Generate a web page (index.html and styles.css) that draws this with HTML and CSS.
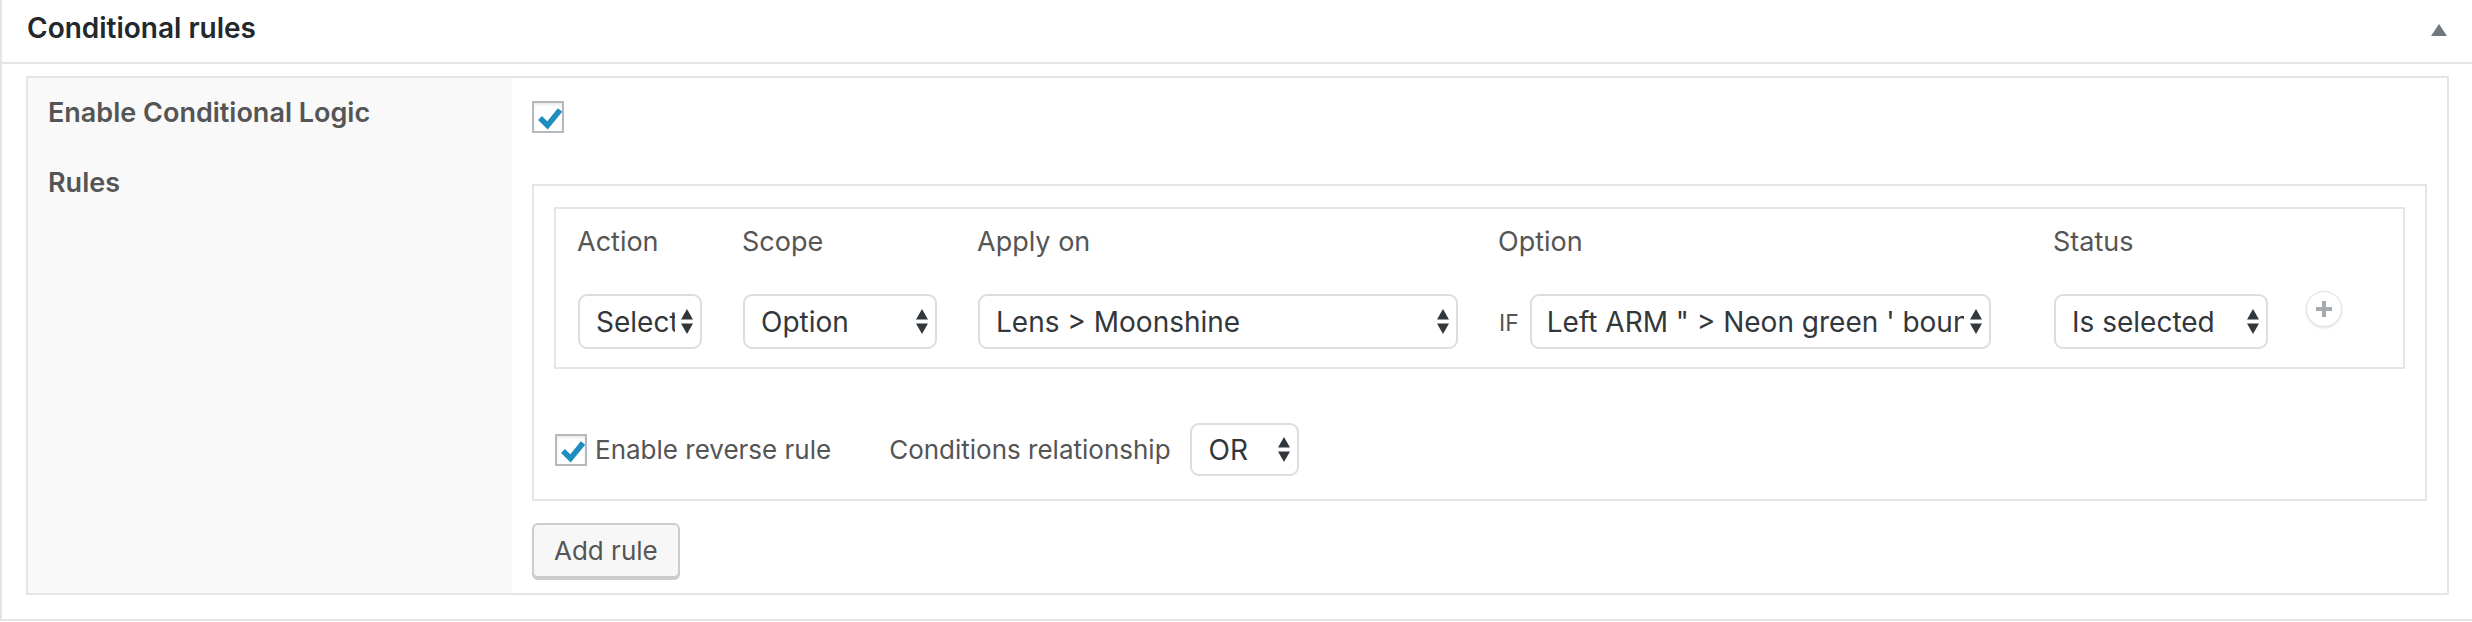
FILE: index.html
```html
<!DOCTYPE html>
<html lang="en">
<head>
<meta charset="utf-8">
<title>Conditional rules</title>
<link rel="stylesheet" href="styles.css">
</head>
<body>
<div class="postbox">
  <div class="hndle">
    <h2 class="hndle-title">Conditional rules</h2>
    <svg class="toggle" width="16" height="12" viewBox="0 0 16 12"><polygon points="8,0 16,12 0,12" fill="#72777c"/></svg>
  </div>
  <div class="inside">
    <div class="form-table">
      <div class="th th-first">Enable Conditional Logic</div>
      <div class="td td-first">
        <span class="checkbox"><svg width="28" height="28" viewBox="0 0 28 28"><polyline points="6,15 13.5,22.5 26,7" fill="none" stroke="#1e8cbe" stroke-width="5.5"/></svg></span>
      </div>
      <div class="th th-rules">Rules</div>
      <div class="td td-rules">
        <div class="rules-box">
          <div class="rule">
            <div class="col-label">Action</div>
            <div class="col-label">Scope</div>
            <div class="col-label">Apply on</div>
            <div class="col-label">Option</div>
            <div class="col-label">Status</div>
            <div class="col-label"></div>

            <div class="select w-action"><span class="select-text">Select</span><svg class="arrows" width="12" height="25" viewBox="0 0 12 25"><polygon points="6,0 12,10.5 0,10.5"/><polygon points="0,14.5 12,14.5 6,25"/></svg></div>
            <div class="select w-scope"><span class="select-text">Option</span><svg class="arrows" width="12" height="25" viewBox="0 0 12 25"><polygon points="6,0 12,10.5 0,10.5"/><polygon points="0,14.5 12,14.5 6,25"/></svg></div>
            <div class="select w-apply"><span class="select-text">Lens &gt; Moonshine</span><svg class="arrows" width="12" height="25" viewBox="0 0 12 25"><polygon points="6,0 12,10.5 0,10.5"/><polygon points="0,14.5 12,14.5 6,25"/></svg></div>
            <div class="cond">
              <span class="if">IF</span>
              <div class="select w-option"><span class="select-text">Left ARM " &gt; Neon green ' bounce</span><svg class="arrows" width="12" height="25" viewBox="0 0 12 25"><polygon points="6,0 12,10.5 0,10.5"/><polygon points="0,14.5 12,14.5 6,25"/></svg></div>
            </div>
            <div class="select w-status"><span class="select-text">Is selected</span><svg class="arrows" width="12" height="25" viewBox="0 0 12 25"><polygon points="6,0 12,10.5 0,10.5"/><polygon points="0,14.5 12,14.5 6,25"/></svg></div>
            <span class="plus"><svg width="16" height="16" viewBox="0 0 16 16"><path d="M8 0v16M0 8h16" stroke="#a7aaad" stroke-width="4"/></svg></span>
          </div>
          <div class="rule-footer">
            <span class="checkbox"><svg width="28" height="28" viewBox="0 0 28 28"><polyline points="6,15 13.5,22.5 26,7" fill="none" stroke="#1e8cbe" stroke-width="5.5"/></svg></span>
            <span class="reverse-label">Enable reverse rule</span>
            <span class="rel-label">Conditions relationship</span>
            <div class="select w-or"><span class="select-text">OR</span><svg class="arrows" width="12" height="25" viewBox="0 0 12 25"><polygon points="6,0 12,10.5 0,10.5"/><polygon points="0,14.5 12,14.5 6,25"/></svg></div>
          </div>
        </div>
        <button class="button" type="button">Add rule</button>
      </div>
    </div>
  </div>
</div>
</body>
</html>
```
FILE: styles.css
```css
html, body {
  margin: 0;
  padding: 0;
  background: #ffffff;
}
body {
  font-family: Inter, "Noto Sans", "DejaVu Sans", sans-serif;
  color: #555555;
}
.postbox {
  box-sizing: border-box;
  width: 100%;
  border-left: 2px solid #e5e5e5;
  border-bottom: 2px solid #e5e5e5;
  background: #ffffff;
}
.hndle {
  display: flex;
  align-items: center;
  justify-content: space-between;
  height: 62px;
  border-bottom: 2px solid #e5e5e5;
  padding: 0 25px 0 25px;
}
.hndle-title {
  margin: 0;
  font-size: 28px;
  font-weight: 600;
  line-height: 40px;
  color: #23282d;
  padding-bottom: 6px;
}
.toggle {
  display: block;
  margin-bottom: 2px;
}
.inside {
  padding: 12px 23px 24px 24px;
}
.form-table {
  display: grid;
  grid-template-columns: 484px 1fr;
  border: 2px solid #e5e5e5;
  background: #ffffff;
}
.th {
  background: #f9f9f9;
  font-size: 27px;
  font-weight: 600;
  line-height: 38px;
  color: #555555;
  padding-left: 20px;
}
.th-first {
  padding-top: 16px;
  padding-bottom: 17px;
}
.th-rules {
  padding-top: 15px;
}
.td {
  padding: 0 20px;
}
.td-first {
  padding-top: 23px;
}
.td-rules {
  padding-top: 35px;
  padding-bottom: 15px;
}
.checkbox {
  box-sizing: border-box;
  display: flex;
  align-items: center;
  justify-content: center;
  width: 32px;
  height: 32px;
  border: 2px solid #b4b9be;
  background: #ffffff;
  box-shadow: inset 0 2px 3px rgba(0, 0, 0, 0.08);
}
.rules-box {
  border: 2px solid #e5e5e5;
  padding: 21px 20px 23px 20px;
}
.rule {
  display: grid;
  grid-template-columns: 165px 235px 521px 555px 252px 36px;
  row-gap: 33px;
  border: 2px solid #e5e5e5;
  padding: 14px 0 18px 22px;
}
.col-label {
  font-size: 27px;
  line-height: 38px;
  color: #555555;
  margin-left: -1px;
}
.select {
  box-sizing: border-box;
  display: flex;
  align-items: center;
  height: 55px;
  border: 2px solid #dddddd;
  border-radius: 9px;
  background: #ffffff;
  padding: 0 7px 0 16px;
  font-size: 28px;
  color: #32373c;
}
.select-text {
  flex: 1;
  min-width: 0;
  overflow: hidden;
  white-space: nowrap;
  margin-right: 6px;
}
.arrows {
  flex: none;
  fill: #32373c;
}
.w-action { width: 124px; }
.w-scope { width: 194px; }
.w-apply { width: 480px; }
.w-option { width: 461px; padding-left: 15px; }
.w-status { width: 214px; }
.w-or { width: 109px; height: 53px; padding-left: 17px; }
.cond {
  display: flex;
  align-items: center;
  gap: 11px;
}
.if {
  font-size: 23px;
  color: #555555;
  padding-top: 2px;
}
.plus {
  box-sizing: border-box;
  display: flex;
  align-items: center;
  justify-content: center;
  width: 36px;
  height: 36px;
  margin-top: -3px;
  border-radius: 50%;
  border: 1px solid #e2e2e2;
  background: #ffffff;
  box-shadow: 0 1px 3px rgba(0, 0, 0, 0.12);
}
.rule-footer {
  display: flex;
  align-items: center;
  margin-top: 54px;
  padding-left: 1px;
  font-size: 26px;
  color: #555555;
}
.reverse-label {
  margin-left: 8px;
}
.rel-label {
  margin-left: 58px;
  margin-right: 19px;
}
.button {
  display: block;
  box-sizing: border-box;
  height: 55px;
  margin-top: 22px;
  padding: 0 20px;
  border: 2px solid #cccccc;
  border-radius: 6px;
  background: #f7f7f7;
  box-shadow: 0 2px 0 #cccccc;
  font-family: inherit;
  font-size: 26px;
  color: #555555;
}
```
